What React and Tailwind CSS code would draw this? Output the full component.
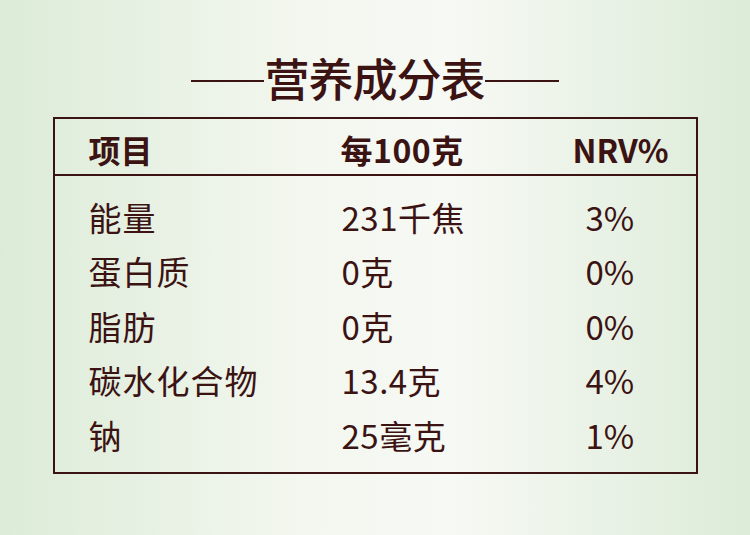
import React from "react";

const rows = [
  ["能量", "231千焦", "3%"],
  ["蛋白质", "0克", "0%"],
  ["脂肪", "0克", "0%"],
  ["碳水化合物", "13.4克", "4%"],
  ["钠", "25毫克", "1%"],
];

const font = { fontFamily: '"Noto Sans CJK SC", "Noto Sans", sans-serif' };

export default function App() {
  return (
    <div
      className="w-[750px] h-[535px] bg-[linear-gradient(90deg,#dcebd8_0%,#f3f7ef_40%,#f7f9f4_60%,#dcebd8_100%)] text-[#3b1313] flex flex-col items-center"
      style={font}
    >
      {/* title */}
      <div className="mt-[55px] flex items-center">
        <div className="w-[73px] h-[2px] bg-[#3b1313] mt-[6px]" />
        <h1 className="text-[45px] leading-[46px] font-medium tracking-[-1px]">营养成分表</h1>
        <div className="w-[74px] h-[2px] bg-[#3b1313] mt-[6px]" />
      </div>

      {/* table */}
      <div className="mt-[16px] w-[645px] border-2 border-[#3b1313]">
        <div className="grid grid-cols-[285px_220px_1fr] h-[57px] items-center pt-[5px] border-b-2 border-[#3b1313] text-[32px] font-bold">
          <div className="pl-[34px]">项目</div>
          <div className="pl-[1px] tracking-[0.5px]">每100克</div>
          <div className="pl-[13px]">NRV%</div>
        </div>
        <div className="pt-[14px] pb-[9px]">
          {rows.map(([name, val, nrv]) => (
            <div key={name} className="grid grid-cols-[285px_220px_1fr] h-[54.5px] items-center text-[33px] leading-none">
              <div className="pl-[34px] tracking-[1px]">{name}</div>
              <div className="pl-[2px] tracking-[0.5px]">{val}</div>
              <div className="pl-[26px]">{nrv}</div>
            </div>
          ))}
        </div>
      </div>
    </div>
  );
}
